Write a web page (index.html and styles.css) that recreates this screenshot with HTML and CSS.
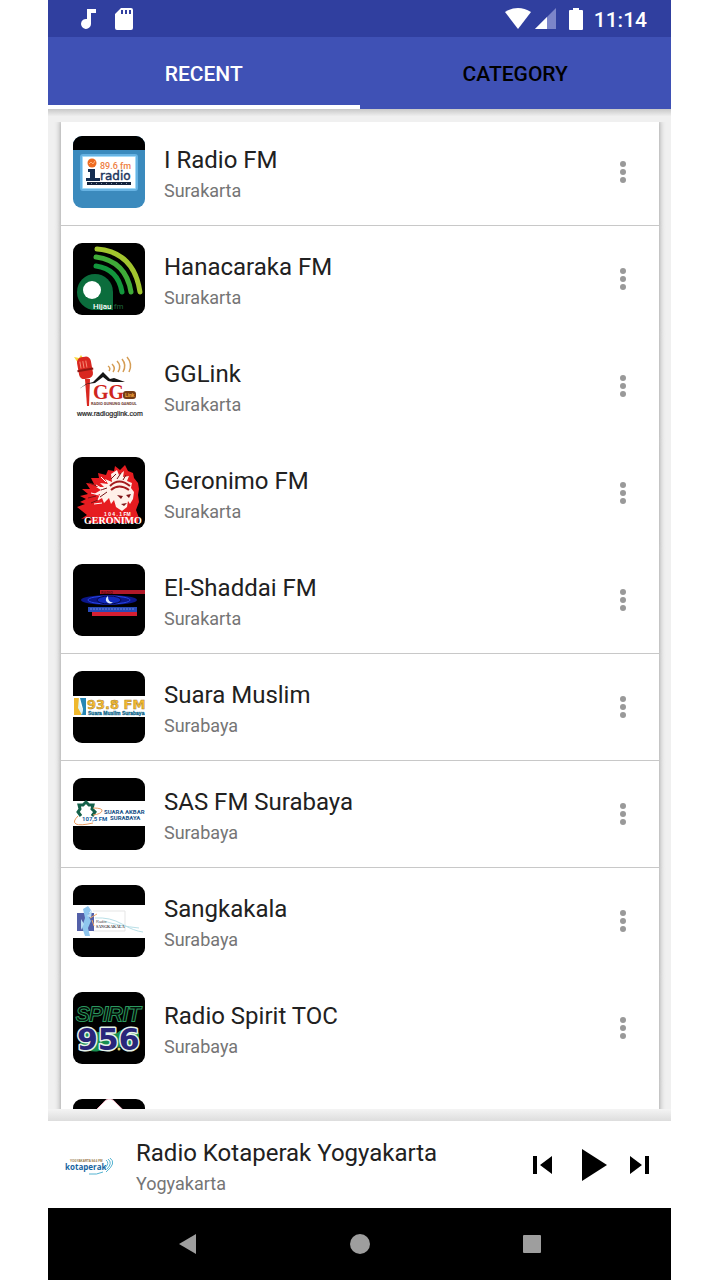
FILE: index.html
```html
<!DOCTYPE html>
<html lang="en">
<head>
    <meta charset="UTF-8">
    <meta name="viewport" content="width=device-width, initial-scale=1.0">
    <title>Radio</title>
    <link rel="stylesheet" href="styles.css">
</head>
<body>

<div class="phone">
    <!-- Status bar -->
    <div class="status-bar">
        <svg class="status-note" width="16" height="22" viewBox="0 0 16 22"><path d="M7 1h9v4h-5v11a5 5 0 1 1-4-5z" fill="#fff"/></svg>
        <svg width="18" height="22" viewBox="0 0 18 22"><path d="M6 0h10q2 0 2 2v18q0 2-2 2H2q-2 0-2-2V6zM6 2v4h2V2zm4 0v4h2V2zm4 0v4h2V2z" fill="#fff" fill-rule="evenodd"/></svg>
        <svg class="status-wifi" width="26" height="22" viewBox="0 0 26 22"><path d="M0 4Q13-4 26 4L13 21z" fill="#fff"/></svg>
        <svg width="21" height="22" viewBox="0 0 21 22"><path d="M21 0v21H0z" fill="#7c85c9"/><path d="M12 9v12H0z" fill="#fff"/></svg>
        <svg class="status-battery" width="14" height="22" viewBox="0 0 14 22"><path d="M4 0h6v2h3q1 0 1 1v18q0 1-1 1H1q-1 0-1-1V3q0-1 1-1h3z" fill="#fff"/></svg>
        <span class="clock">11:14</span>
    </div>

    <div class="tab">
        <button class="tablink active">RECENT</button>
        <button class="tablink">CATEGORY</button>
    </div>

    <!-- Station list -->
    <main class="content">
        <ul class="stations">
            <li>
                <div class="station line">
                    <svg class="logo" viewBox="0 0 72 72">
                        <rect width="72" height="72" fill="#3b8abd"/>
                        <rect width="72" height="14"/>
                        <rect x="7" y="18" width="58" height="37" rx="3" fill="#67b3e3"/>
                        <rect x="9" y="20" width="54" height="33" rx="1" fill="#a5daf7"/>
                        <rect x="10" y="21" width="52" height="31" fill="#fff"/>
                        <circle cx="19" cy="27" r="4.5" fill="#ee6c22"/>
                        <path d="M16 28l2-2 2 2 2-3" fill="none" stroke="#ffb17d"/>
                        <text x="27" y="33" font-size="9" font-weight="500" fill="#ee8043">89.6 fm</text>
                        <path d="M15 33h7v9h5v3H13v-3h4v-6h-2z" fill="#142c50"/>
                        <text class="wide" x="27" y="44" font-size="12" fill="#1c345c" stroke="#1c345c" stroke-width=".4">radio</text>
                        <rect x="14" y="46" width="44" height="3" fill="#13223b"/>
                        <path d="M18 47.500h37" stroke="#8996a9" stroke-dasharray="1 4"/>
                    </svg>
                    <div class="info"><h2>I Radio FM</h2><p>Surakarta</p></div>
                    <button class="more" aria-label="More"><svg width="24" height="24" viewBox="0 0 24 24"><circle cx="12" cy="4" r="3"/><circle cx="12" cy="12" r="3"/><circle cx="12" cy="20" r="3"/></svg></button>
                </div>
            </li>
            <li>
                <div class="station">
                    <svg class="logo" viewBox="0 0 72 72">
                        <rect width="72" height="72"/>
                        <g fill="none" stroke-width="5" stroke-linecap="round">
                            <path d="M24 6Q61 9 67 49" stroke="#a2c52e"/>
                            <path d="M23 14Q53 18 58 49" stroke="#3fab38"/>
                            <path d="M23 23Q45 26 49 49" stroke="#12963c"/>
                        </g>
                        <path d="M22 31a18 18 0 0 1 18 18v18H22a18 18 0 0 1 0-36z" fill="#0b6d3c"/>
                        <circle cx="19" cy="47" r="9" fill="#fff"/>
                        <text x="20" y="66" font-size="8" font-weight="500" fill="#fff">Hijau<tspan fill="#17532f">.fm</tspan></text>
                    </svg>
                    <div class="info"><h2>Hanacaraka FM</h2><p>Surakarta</p></div>
                    <button class="more" aria-label="More"><svg width="24" height="24" viewBox="0 0 24 24"><circle cx="12" cy="4" r="3"/><circle cx="12" cy="12" r="3"/><circle cx="12" cy="20" r="3"/></svg></button>
                </div>
            </li>
            <li>
                <div class="station">
                    <svg class="logo" viewBox="0 0 72 72">
                        <rect width="72" height="72" fill="#fff"/>
                        <path d="M1 7l5 1 2-3 2 3 5-1-3 5-7 1z" fill="#f7d83c"/>
                        <g transform="rotate(-10 11 18)">
                            <rect x="5" y="7" width="14" height="22" rx="5" fill="#d92720"/>
                            <path d="M8 11v7m3-7v7m3-7v7" stroke="#f68b75"/>
                            <path d="M4 20h16" stroke="#8f1712" stroke-width="2"/>
                        </g>
                        <path d="M12 29h5l-1 27h-2z" fill="#d92720"/>
                        <path d="M6 39l7-5 7-2 10-10 7 7 4-1 11 4-12 0-5-1-5-4-8 6-8 1z" fill="#151515"/>
                        <g fill="none" stroke="#d59d55" stroke-width="1.500">
                            <path d="M35 16q3 2 1 5"/><path d="M39 14q4 4 1 8"/><path d="M44 11q5 5 1 11"/><path d="M49 9q5 6 1 13"/><path d="M54 7q6 7 2 15"/>
                        </g>
                        <text class="serif" x="20" y="49" font-size="20" font-weight="700" fill="#cf251d">GG</text>
                        <rect x="50" y="41" width="13" height="8" rx="3" fill="#753c15"/>
                        <text x="52" y="47" font-size="5" font-weight="700" fill="#f3a53c">Link</text>
                        <text x="18" y="55" font-size="4" font-weight="700" fill="#703c34">RADIO GUNUNG GANDUL</text>
                        <text class="sans" x="4" y="66" font-size="7" fill="#222" stroke="#222" stroke-width=".2">www.radiogglink.com</text>
                    </svg>
                    <div class="info"><h2>GGLink</h2><p>Surakarta</p></div>
                    <button class="more" aria-label="More"><svg width="24" height="24" viewBox="0 0 24 24"><circle cx="12" cy="4" r="3"/><circle cx="12" cy="12" r="3"/><circle cx="12" cy="20" r="3"/></svg></button>
                </div>
            </li>
            <li>
                <div class="station">
                    <svg class="logo" viewBox="0 0 72 72">
                        <rect width="72" height="72"/>
                        <path d="M4 50l8-3-5-2 6-3-6-3 8-2-6-5 8 0-4-6 8 1-3-6 8 0-1-5 8 2 2-5 6 1 1-5 5 4 5-5 3 6 5 2 1 5 4 5 1 6-1 6 1 7-3 8 3 8-1 5H15l4-6-11 2 6-4z" fill="#e61c20"/>
                        <path d="M38 17l6-4 2 5 5-4-1 6 6-1-2 5 5 2-1 5 3 4-1 7-3 5-2-3-1 6-5 4-6-4-2-7-3 4-2-6-5 5-2-5-5 3 3-7-6 0 7-4-5-3 8 0-4-4 8 1-3-5 7 3z" fill="#fff0e9"/>
                        <path d="M37 29q9-9 20 0M38 33q8-7 18 0" fill="none" stroke="#a51b1e" stroke-width="2"/>
                        <path d="M44 38l6 1-2 3zm9 0l5-1-2 4zm-5 9l6-1-3 3z" fill="#811518"/>
                        <path d="M38 22l5-5m1 5l4-6m2 7l3-5m-25 15l6-2m-7 9l7-5m-18-9l8 3m-9 12l8-2m-5 7l7-3" stroke="#741316"/>
                        <path d="M28 20l5 5m-10 3l7 4m-12 4l8 2m-5 9l8-1" stroke="#fff"/>
                        <text class="sans" x="31" y="59" font-size="5" font-weight="700" fill="#fff">1 0 4  . 1 FM</text>
                        <text class="serif" x="11" y="67" font-size="10" font-weight="700" fill="#fff">GERONIMO</text>
                    </svg>
                    <div class="info"><h2>Geronimo FM</h2><p>Surakarta</p></div>
                    <button class="more" aria-label="More"><svg width="24" height="24" viewBox="0 0 24 24"><circle cx="12" cy="4" r="3"/><circle cx="12" cy="12" r="3"/><circle cx="12" cy="20" r="3"/></svg></button>
                </div>
            </li>
            <li>
                <div class="station line">
                    <svg class="logo" viewBox="0 0 72 72">
                        <rect width="72" height="72"/>
                        <rect x="27" y="26" width="45" height="4" fill="#b01929"/>
                        <text x="28" y="30" font-size="4" font-weight="700" fill="#5b0713">RADIO</text>
                        <ellipse cx="36" cy="36" rx="28" ry="5" fill="#0b1688"/>
                        <ellipse cx="36" cy="36" rx="21" ry="4" fill="none" stroke="#2746e9"/>
                        <ellipse cx="36" cy="36" rx="12" ry="4" fill="#1029bd" stroke="#05094a"/>
                        <path d="M35 32a4 4 0 1 0 5 6q-5 1-5-6z" fill="#d8e8ff"/>
                        <rect x="15" y="43" width="49" height="5" fill="#294bb8"/>
                        <path d="M17 45h44" stroke="#6f87dd" stroke-dasharray="2 1"/>
                        <rect x="19" y="48" width="45" height="4" fill="#d51f32"/>
                    </svg>
                    <div class="info"><h2>El-Shaddai FM</h2><p>Surakarta</p></div>
                    <button class="more" aria-label="More"><svg width="24" height="24" viewBox="0 0 24 24"><circle cx="12" cy="4" r="3"/><circle cx="12" cy="12" r="3"/><circle cx="12" cy="20" r="3"/></svg></button>
                </div>
            </li>
            <li>
                <div class="station line">
                    <svg class="logo" viewBox="0 0 72 72">
                        <rect width="72" height="72"/>
                        <rect y="25" width="72" height="21" fill="#fff"/>
                        <path d="M1 27h5v9l4 8H1z" fill="#efb82d"/>
                        <path d="M7 27h6v17H8l2-6z" fill="#2687b5"/>
                        <path d="M6 26l1 8 3 5-1 5-4-7z" fill="#dff2f5"/>
                        <text class="wide" x="14" y="38" font-size="13" font-weight="700" fill="#f8bd2e" stroke="#a98233" stroke-width=".5">93.8 FM</text>
                        <text class="sans" x="15" y="44" font-size="5" font-weight="700" fill="#14698d" stroke="#14698d" stroke-width=".3">Suara Muslim Surabaya</text>
                    </svg>
                    <div class="info"><h2>Suara Muslim</h2><p>Surabaya</p></div>
                    <button class="more" aria-label="More"><svg width="24" height="24" viewBox="0 0 24 24"><circle cx="12" cy="4" r="3"/><circle cx="12" cy="12" r="3"/><circle cx="12" cy="20" r="3"/></svg></button>
                </div>
            </li>
            <li>
                <div class="station line">
                    <svg class="logo" viewBox="0 0 72 72">
                        <rect width="72" height="72"/>
                        <rect y="23" width="72" height="25" fill="#fff"/>
                        <path d="M8 38l-3-4 2-3-1-4 4 0 3-3 3 3 4 0-1 4 3 3-3 4" fill="none" stroke="#14614a" stroke-width="3"/>
                        <path d="M20 30q10 0 9 3t-9 4M5 38q-6 6-2 8t17-1" fill="none" stroke="#e79a5f"/>
                        <text x="9" y="43" font-size="6" font-weight="700" fill="#155c9b">107,5 FM</text>
                        <text x="31" y="36" font-size="6" font-weight="700" fill="#165087">SUARA AKBAR</text>
                        <text x="37" y="42" font-size="6" font-weight="700" fill="#165087">SURABAYA</text>
                    </svg>
                    <div class="info"><h2>SAS FM Surabaya</h2><p>Surabaya</p></div>
                    <button class="more" aria-label="More"><svg width="24" height="24" viewBox="0 0 24 24"><circle cx="12" cy="4" r="3"/><circle cx="12" cy="12" r="3"/><circle cx="12" cy="20" r="3"/></svg></button>
                </div>
            </li>
            <li>
                <div class="station">
                    <svg class="logo" viewBox="0 0 72 72">
                        <rect width="72" height="72"/>
                        <rect y="20" width="72" height="33" fill="#fff"/>
                        <path d="M20 26h32v20H20" fill="none" stroke="#e5e5e5"/>
                        <rect x="4" y="28" width="17" height="18" fill="#5360a8"/>
                        <path d="M10 24l5-3 3 4-3 5 3 6-3 7 2 8h-5l-3-9 3-9z" fill="#8fc6ee"/>
                        <path d="M14 31l5-6-1 8zM8 34l3 5-3 6z" fill="#b9dcf4"/>
                        <path d="M17 33l7-4m-5 6l2 6" stroke="#f0a86a"/>
                        <path d="M22 33q15-1 27 6t21 8M31 36q15 5 35 7" fill="none" stroke="#b9dfe7"/>
                        <text class="sans" x="23" y="38" font-size="4" fill="#555">Radio</text>
                        <text class="serif" x="23" y="43" font-size="4" font-weight="700" fill="#444">SANGKAKALA</text>
                    </svg>
                    <div class="info"><h2>Sangkakala</h2><p>Surabaya</p></div>
                    <button class="more" aria-label="More"><svg width="24" height="24" viewBox="0 0 24 24"><circle cx="12" cy="4" r="3"/><circle cx="12" cy="12" r="3"/><circle cx="12" cy="20" r="3"/></svg></button>
                </div>
            </li>
            <li>
                <div class="station">
                    <svg class="logo" viewBox="0 0 72 72">
                        <rect width="72" height="72"/>
                        <text class="sans" x="3" y="29" font-size="20" font-style="italic" fill="#04120a" stroke="#2c9a5f" stroke-width="2" paint-order="stroke">SPIRIT</text>
                        <path d="M6 40q10-8 18 0l20 1q10-9 22 0v12q-9 8-18 2l-22 4q-8 2-18-4z" fill="#178f50"/>
                        <text class="wide freq" x="4" y="58" font-size="30" font-weight="700">956</text>
                        <circle cx="46" cy="57" r="1.500" fill="#e3d36a"/>
                    </svg>
                    <div class="info"><h2>Radio Spirit TOC</h2><p>Surabaya</p></div>
                    <button class="more" aria-label="More"><svg width="24" height="24" viewBox="0 0 24 24"><circle cx="12" cy="4" r="3"/><circle cx="12" cy="12" r="3"/><circle cx="12" cy="20" r="3"/></svg></button>
                </div>
            </li>
            <li>
                <div class="station">
                    <svg class="logo" viewBox="0 0 72 72">
                        <rect width="72" height="72"/>
                        <path d="M35 0h3q3 1 5 4l29 28-36 36L0 34 30 4q2-3 5-4z" fill="#fff" stroke="#f3b5c3"/>
                    </svg>
                </div>
            </li>
        </ul>
    </main>

    <!-- Now playing -->
    <div class="player">
        <svg class="cover" width="50" height="50" viewBox="0 0 50 50">
            <text class="sans" x="6" y="22" font-size="3" font-weight="700" fill="#95743f">YOGYAKARTA 94.6 FM</text>
            <text class="open" x="1" y="30" font-size="8" font-weight="700" fill="#17649f">kotaperak</text>
            <g fill="none" stroke="#55b3d1">
                <path d="M42 20q4 3-1 8"/><path d="M44 19q5 4-1 10"/><path d="M46 18q7 5-4 14"/><path d="M25 34q8 1 14-2"/>
            </g>
        </svg>
        <div class="info"><h2>Radio Kotaperak Yogyakarta</h2><p>Yogyakarta</p></div>
        <div class="controls">
            <button aria-label="Previous"><svg width="20" height="32" viewBox="0 0 20 32"><path d="M0 7h4v18H0zM19 7v18L7 16z"/></svg></button>
            <button aria-label="Play"><svg width="32" height="32" viewBox="0 0 32 32"><path d="M7 0v32l25-16z"/></svg></button>
            <button aria-label="Next"><svg width="20" height="32" viewBox="0 0 20 32"><path d="M1 7l12 9-12 9zM16 7h4v18h-4z"/></svg></button>
        </div>
    </div>

    <div class="nav-bar">
        <button aria-label="Back"><svg width="20" height="20" viewBox="0 0 20 20"><path d="M18 0v20L1 10z"/></svg></button>
        <button aria-label="Home"><svg width="20" height="20" viewBox="0 0 20 20"><circle cx="10" cy="10" r="10"/></svg></button>
        <button aria-label="Overview"><svg width="20" height="20" viewBox="0 0 20 20"><rect x="1" y="1" width="18" height="18" rx="1"/></svg></button>
    </div>
</div>

</body>
</html>
```
FILE: styles.css
```css
* {
    box-sizing: border-box;
}

body {
    margin: 0;
    background-color: white;
    font-family: Roboto, sans-serif;
}

button {
    border: none;
    padding: 0;
    background: none;
    font-family: inherit;
    cursor: pointer;
}

svg {
    display: block;
    flex-shrink: 0;
}

.phone {
    display: flex;
    flex-direction: column;
    height: 100vh;
    margin: 0 49px 0 48px;
}

.status-bar {
    display: flex;
    align-items: center;
    height: 37px;
    padding: 0 24px 0 32px;
    background-color: #303f9f;
}

.status-note {
    margin-right: 19px;
}

.status-wifi {
    margin-left: auto;
    margin-right: 4px;
}

.status-battery {
    margin: 0 11px 0 13px;
}

.clock {
    color: white;
    font-size: 21px;
    font-weight: 500;
    line-height: 22px;
    padding-top: 2px;
}

.tab {
    display: flex;
    height: 72px;
    background-color: #3f51b5;
}

.tab button {
    flex: 1;
    padding-top: 6px;
    border-bottom: 4px solid transparent;
    font-size: 21px;
    font-weight: 500;
    color: black;
}

.tab button.active {
    color: white;
    border-bottom-color: white;
}

.content {
    display: flex;
    flex: 1;
    min-height: 0;
    padding: 13px 0 12px;
    background: linear-gradient(#c8c8c8, #eee) top / 100% 7px no-repeat,
                linear-gradient(#f4f4f4, #ddd) bottom / 100% 12px no-repeat,
                #f0f0f0;
}

.stations {
    flex: 1;
    margin: 0;
    padding: 0 12px 0 13px;
    list-style: none;
    overflow: hidden;
}

.stations li {
    box-shadow: 0 1px 6px rgba(0, 0, 0, 0.4);
}

.station {
    position: relative;
    z-index: 1;
    display: flex;
    align-items: center;
    height: 107px;
    padding: 0 24px 0 12px;
    border-bottom: 1px solid white;
    background-color: white;
}

.station.line {
    border-bottom-color: #c8c8c8;
}

/* the first row is scrolled slightly under the tabs */
.stations li:first-child {
    margin-top: -3px;
}

.logo {
    width: 72px;
    height: 72px;
    margin-right: 19px;
    border-radius: 9px;
}

.serif {
    font-family: "Liberation Serif", serif;
}

.sans {
    font-family: "Liberation Sans", sans-serif;
}

.open {
    font-family: "Open Sans", sans-serif;
}

.wide {
    font-family: "DejaVu Sans", sans-serif;
}

.freq {
    fill: #29267a;
    stroke: #e6f3ea;
    stroke-width: 3px;
    stroke-linejoin: round;
    paint-order: stroke;
}

.info {
    flex: 1;
    padding-top: 6px;
}

.info h2 {
    margin: 0;
    font-size: 24px;
    font-weight: 400;
    line-height: 32px;
    color: #212121;
}

.info p {
    margin: 0;
    font-size: 18px;
    line-height: 30px;
    color: #757575;
}

.more {
    fill: #999;
}

.player {
    display: flex;
    align-items: center;
    height: 87px;
    padding: 0 8px 0 16px;
    background-color: white;
}

.cover {
    margin-right: 22px;
}

.controls {
    display: flex;
}

.controls button {
    display: flex;
    justify-content: center;
    width: 48px;
}

.nav-bar {
    display: flex;
    justify-content: center;
    align-items: center;
    height: 72px;
    background-color: black;
}

.nav-bar button {
    display: flex;
    justify-content: center;
    width: 172px;
    fill: #9e9e9e;
}
```
